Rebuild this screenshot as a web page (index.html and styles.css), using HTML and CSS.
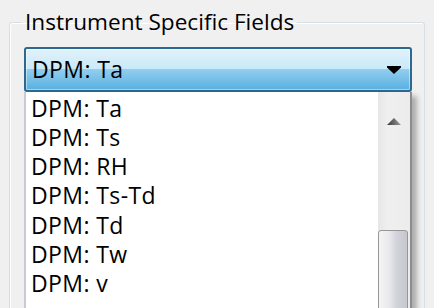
FILE: index.html
```html
<!DOCTYPE html>
<html lang="en">
<head>
  <meta charset="UTF-8">
  <title>Instrument Specific Fields</title>
  <link rel="stylesheet" href="styles.css">
</head>
<body>
  <fieldset class="group">
    <legend class="group-title">Instrument Specific Fields</legend>

    <div class="combo">
      <span class="combo-value">DPM: Ta</span>
      <svg class="combo-arrow" width="14" height="8" viewBox="0 0 14 8">
        <polygon points="0,0 14,0 14,1.5 7,8 0,1.5" fill="#000"/>
      </svg>
    </div>

    <div class="dropdown">
      <ul class="options">
        <li class="option">DPM: Ta</li>
        <li class="option">DPM: Ts</li>
        <li class="option">DPM: RH</li>
        <li class="option">DPM: Ts-Td</li>
        <li class="option">DPM: Td</li>
        <li class="option">DPM: Tw</li>
        <li class="option">DPM: v</li>
      </ul>
      <div class="scrollbar">
        <div class="scroll-btn">
          <svg width="14" height="8" viewBox="0 0 14 8">
            <defs>
              <linearGradient id="arrowFill" x1="0" y1="0" x2="1" y2="0">
                <stop offset="0" stop-color="#3a3a3a"/>
                <stop offset="1" stop-color="#9a9a9a"/>
              </linearGradient>
            </defs>
            <polygon points="7,0 14,7 0,7" fill="url(#arrowFill)"/>
          </svg>
        </div>
        <div class="scroll-track"></div>
        <div class="scroll-thumb"></div>
      </div>
    </div>
  </fieldset>
</body>
</html>
```

FILE: styles.css
```css
* {
  box-sizing: border-box;
  margin: 0;
  padding: 0;
}

html, body {
  height: 100%;
  font-family: 'Open Sans', 'Noto Sans', 'DejaVu Sans', sans-serif;
  color: #000;
}

body {
  background: #f0f0f0;
  overflow: hidden;
}

/* Group box */
.group {
  margin: 10px 9px 0 9px;
  padding: 13px 12px 0 14px;
  border: 1px solid #d5dfe5;
  border-bottom: none;
  border-radius: 3px 3px 0 0;
  box-shadow: inset 1px 1px 0 #ffffff;
  height: 340px;
}

.group-title {
  margin-left: -2px;
  padding: 0 3px;
  font-size: 22.6px;
  line-height: 24px;
}

/* Combo box */
.combo {
  height: 45px;
  display: flex;
  align-items: center;
  justify-content: space-between;
  padding: 0 9px 0 6px;
  border: 2px solid #2c6890;
  border-radius: 3px;
  background: linear-gradient(to bottom, #e1f2fb 0%, #c9e9f8 49%, #91ceef 50%, #58afe0 100%);
  box-shadow: inset 0 0 0 1px rgba(255, 255, 255, 0.45);
}

.combo-value {
  font-size: 23px;
  line-height: 24px;
  letter-spacing: 0.4px;
  margin-top: -2px;
}

.combo-arrow {
  display: block;
}

/* Drop-down list */
.dropdown {
  display: flex;
  height: 240px;
  background: #ffffff;
  border-left: 2px solid #c9c9d8;
  border-right: 2px solid #8d8d8d;
  box-shadow: 6px 3px 5px -1px rgba(0, 0, 0, 0.28);
}

.options {
  flex: 1;
  list-style: none;
  padding: 2px 0 0 5px;
}

.option {
  font-size: 23px;
  line-height: 29.17px;
  height: 29.17px;
  letter-spacing: 0.4px;
}

.scrollbar {
  width: 32px;
  display: flex;
  flex-direction: column;
  background: linear-gradient(to right, #e6e6e6 0%, #efefef 30%, #ececec 100%);
}

.scroll-btn {
  height: 36px;
  display: flex;
  align-items: flex-end;
  justify-content: center;
  padding-bottom: 2px;
}

.scroll-btn svg {
  display: block;
}

.scroll-track {
  height: 102px;
}

.scroll-thumb {
  flex: 1;
  margin-right: 2px;
  border: 1px solid #979797;
  border-radius: 3px 3px 0 0;
  background: linear-gradient(to right, #f4f4f4 0%, #eaeaee 35%, #d4d4dc 60%, #c6c6cf 100%);
}
```
